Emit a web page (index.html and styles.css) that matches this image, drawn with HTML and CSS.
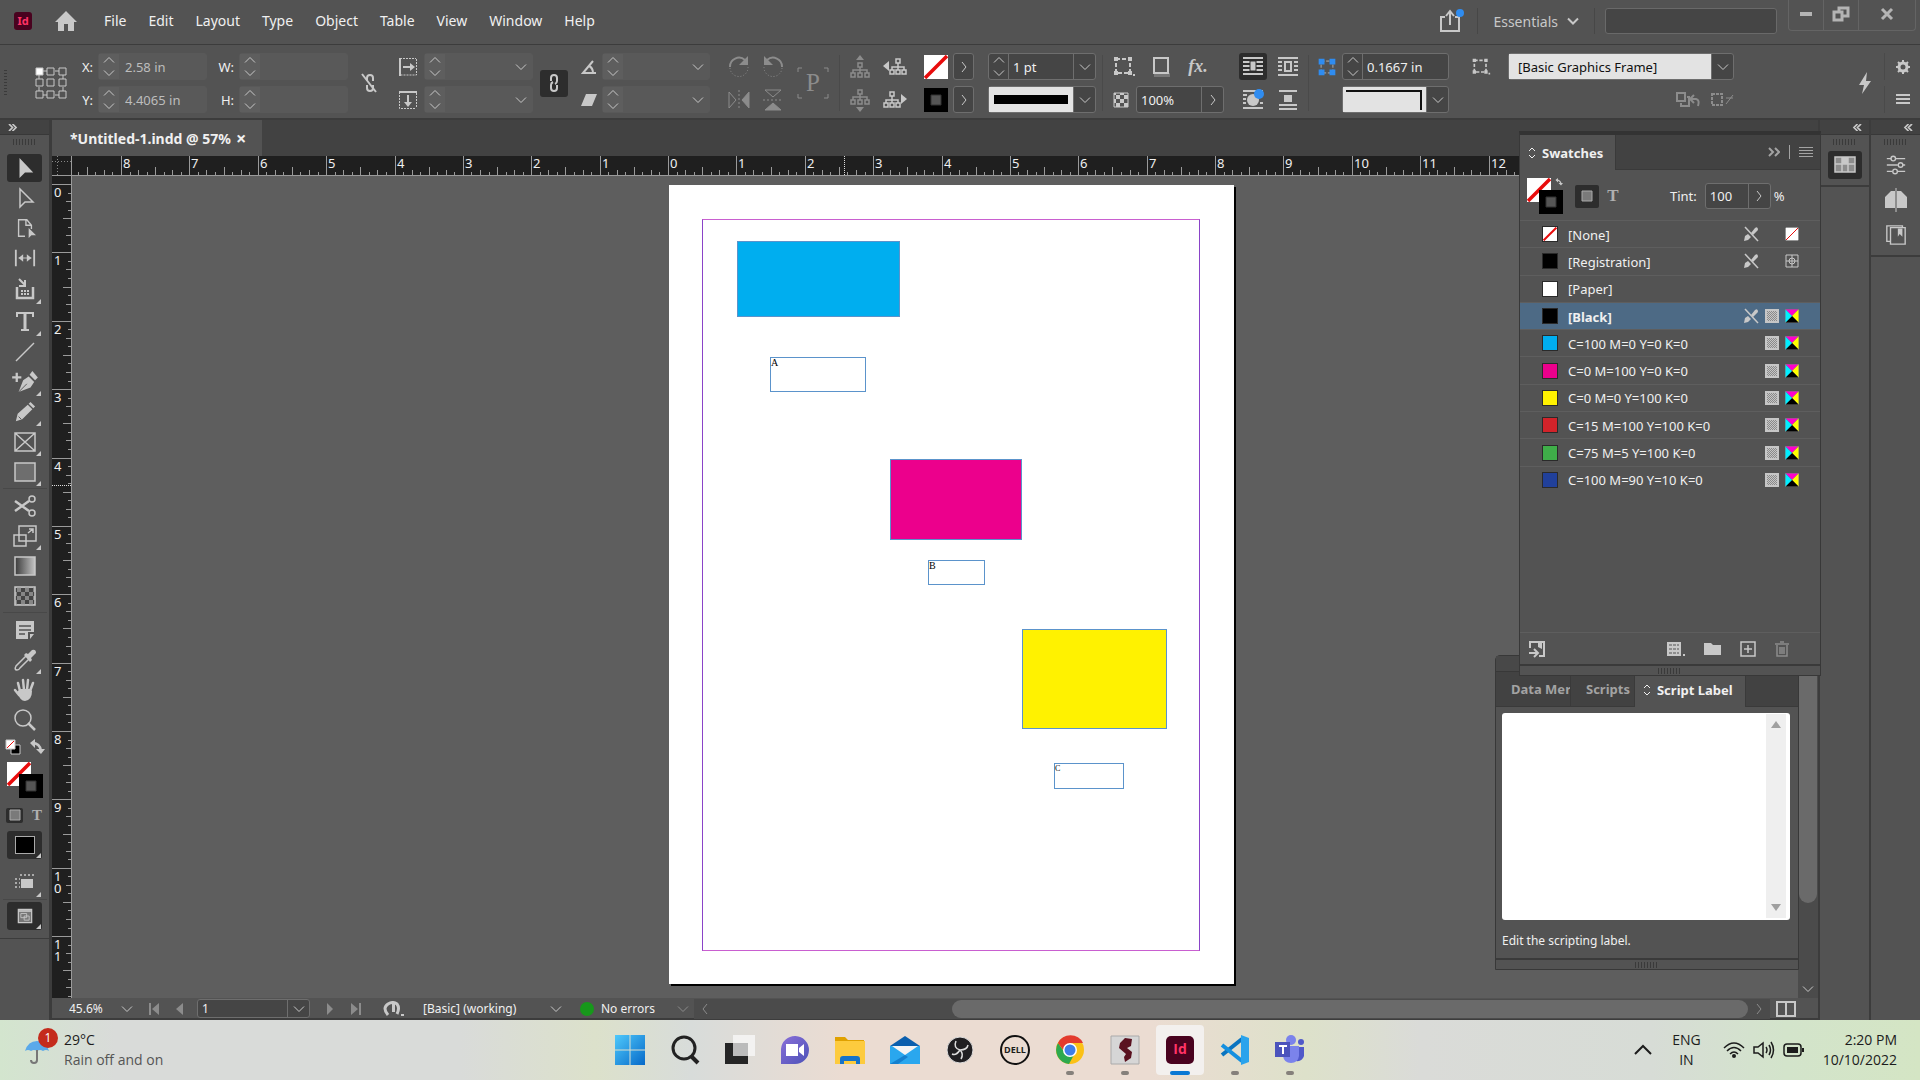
FILE: index.html
```html
<!DOCTYPE html>
<html lang="en">
<head>
  <meta charset="UTF-8">
  <meta name="viewport" content="width=device-width, initial-scale=1.0">
  <title>*Untitled-1.indd @ 57%</title>
  <link rel="stylesheet" href="styles.css">
</head>
<body>
  <!-- Icon sprite -->
  <svg class="sprite" width="0" height="0">
    <defs>
      <linearGradient id="g-grad"><stop offset="0" stop-color="#3a3a3a"/><stop offset="1" stop-color="#c4c4c4"/></linearGradient>
      <linearGradient id="g-win" x2="1" y2="1"><stop offset="0" stop-color="#4fc9fb"/><stop offset="1" stop-color="#0669c9"/></linearGradient>
      <linearGradient id="g-chat" x2="1" y2="1"><stop offset="0" stop-color="#8a6fd8"/><stop offset="1" stop-color="#4c52b8"/></linearGradient>
      <pattern id="p-check" width="8" height="8" patternUnits="userSpaceOnUse"><path fill="#c8c8c8" stroke="none" d="M0 0h4v4H0zM4 4h4v4H4z"/></pattern>
      <pattern id="p-dots" width="2" height="2" patternUnits="userSpaceOnUse"><path fill="#8a8a8a" stroke="none" d="M0 0h1v1H0zM1 1h1v1H1z"/></pattern>
    </defs>
    <symbol id="up" viewBox="0 0 12 8"><path d="M1 6.500l5-5 5 5"/></symbol>
    <symbol id="down" viewBox="0 0 12 8"><path d="M1 1.500l5 5 5-5"/></symbol>
    <symbol id="right" viewBox="0 0 8 12"><path d="M2 1l4 5-4 5"/></symbol>
    <symbol id="left" viewBox="0 0 8 12"><path d="M6 1L2 6l4 5"/></symbol>
    <symbol id="rr" viewBox="0 0 8 6"><path stroke-width="1.500" d="M1 0l3 3-3 3M4 0l3 3-3 3"/></symbol>
    <symbol id="ll" viewBox="0 0 8 6"><path stroke-width="1.500" d="M4 0L1 3l3 3M7 0L4 3l3 3"/></symbol>
    <symbol id="none" viewBox="0 0 24 24"><path fill="#fff" stroke="none" d="M0 0h24v24H0z"/><path stroke="#e80c0c" stroke-width="3.500" d="M1 23L23 1"/></symbol>
    <symbol id="stroke" viewBox="0 0 24 24"><path fill="#000" stroke="none" d="M0 0h24v24H0z"/><path fill="#555" stroke="#333" d="M7 7h10v10H7z"/></symbol>
    <symbol id="home" viewBox="0 0 24 24"><path fill="currentColor" stroke="none" d="M12 2L1 13h3v9h6v-7h4v7h6v-9h3z"/></symbol>
    <symbol id="share" viewBox="0 0 28 26"><path stroke-width="2" d="M8 9H4v14h18V9h-4M13 17V4M9 8l4-5 4 5"/><circle cx="23" cy="5" r="4" fill="#2f8cf0" stroke="none"/></symbol>
    <symbol id="anchor" viewBox="0 0 32 32"><path d="M8 4h4M20 4h4M8 28h4M20 28h4M4 8v4M4 20v4M28 8v4M28 20v4"/><path fill="#fff" d="M1 1h7v7H1z"/><path d="M12 1h7v7h-7zM24 1h7v7h-7zM1 12h7v7H1zM12 12h7v7h-7zM24 12h7v7h-7zM1 24h7v7H1zM12 24h7v7h-7zM24 24h7v7h-7z"/></symbol>
    <symbol id="link" viewBox="0 0 24 24"><path stroke-width="2" d="M9 10V7a3 3 0 0 1 6 0v3q0 2-2 3M15 14v3a3 3 0 0 1-6 0v-3q0-2 2-3"/></symbol>
    <symbol id="unlink" viewBox="0 0 24 24"><path stroke-width="2" d="M9 10V7a3 3 0 0 1 6 0v3M15 14v3a3 3 0 0 1-6 0v-3M4 3l14 18"/></symbol>
    <symbol id="scalex" viewBox="0 0 20 20"><path stroke-width="2" d="M2 1v18M5 10h9"/><path d="M2 1.500h16M18.500 2v16H3" stroke-dasharray="2 1"/><path fill="currentColor" stroke="none" d="M12 6l5 4-5 4z"/></symbol>
    <symbol id="scaley" viewBox="0 0 20 20"><path stroke-width="2" d="M1 2h18M10 5v9"/><path d="M1.500 2v16.500H18M18.500 3v15" stroke-dasharray="2 1"/><path fill="currentColor" stroke="none" d="M6 12l4 5 4-5z"/></symbol>
    <symbol id="angle" viewBox="0 0 16 16"><path stroke-width="2" d="M12 2L2 14h13M8 7q4 2 4 7"/></symbol>
    <symbol id="shear" viewBox="0 0 16 16"><path fill="currentColor" stroke="none" d="M5 2h11l-5 12H0z"/></symbol>
    <symbol id="cw" viewBox="0 0 24 24"><path stroke-width="2" d="M3 12a9 9 0 0 1 15-7"/><path d="M3 13a9 9 0 0 0 18-1" stroke-dasharray="1 2"/><path fill="currentColor" stroke="none" d="M21 1v9h-9z"/></symbol>
    <symbol id="ccw" viewBox="0 0 24 24"><path stroke-width="2" d="M21 12A9 9 0 0 0 6 5"/><path d="M21 13a9 9 0 0 1-18-1" stroke-dasharray="1 2"/><path fill="currentColor" stroke="none" d="M3 1v9h9z"/></symbol>
    <symbol id="fliph" viewBox="0 0 24 24"><path d="M2 4v16l7-8z"/><path d="M12 2v20" stroke-dasharray="2 2"/><path fill="currentColor" d="M22 4v16l-7-8z"/></symbol>
    <symbol id="flipv" viewBox="0 0 24 24"><path d="M4 2h16l-8 7z"/><path d="M2 12h20" stroke-dasharray="2 2"/><path fill="currentColor" d="M4 22h16l-8-7z"/></symbol>
    <symbol id="pbox" viewBox="0 0 32 32"><path d="M1 5V1h4M27 1h4v4M1 27v4h4M27 31h4v-4"/></symbol>
    <symbol id="treeup" viewBox="0 0 24 24"><path fill="currentColor" stroke="none" d="M8 5l4-5 4 5z"/><path stroke-width="1.500" d="M10 8h4v4h-4zM12 12v3M5 18v-3h14v3M12 15v3M3 18h4v4H3zM10 18h4v4h-4zM17 18h4v4h-4z"/></symbol>
    <symbol id="treedn" viewBox="0 0 24 24"><path fill="currentColor" stroke="none" d="M8 19l4 5 4-5z"/><path stroke-width="1.500" d="M10 2h4v4h-4zM12 6v3M5 12V9h14v3M12 9v3M3 12h4v4H3zM10 12h4v4h-4zM17 12h4v4h-4z"/></symbol>
    <symbol id="treel" viewBox="0 0 24 24"><path fill="currentColor" stroke="none" d="M6 6L0 11l6 5z"/><path stroke-width="1.500" d="M13 4h4v4h-4zM15 8v4M9 15v-3h12v3M15 12v3M7 15h4v4H7zM13 15h4v4h-4zM19 15h4v4h-4z"/></symbol>
    <symbol id="treer" viewBox="0 0 24 24"><path fill="currentColor" stroke="none" d="M18 6l6 5-6 5z"/><path stroke-width="1.500" d="M7 4h4v4H7zM9 8v4M3 15v-3h12v3M9 12v3M1 15h4v4H1zM7 15h4v4H7zM13 15h4v4h-4z"/></symbol>
    <symbol id="corners" viewBox="0 0 24 24"><path stroke-width="2" stroke-dasharray="4 2" d="M4 4h14v14H4z"/><path fill="currentColor" stroke="none" d="M2 2h4v4H2zM16 2h4v4h-4zM2 16h4v4H2zM16 16h4v4h-4zM21 19h2v2h-2z"/></symbol>
    <symbol id="shadow" viewBox="0 0 24 24"><path fill="#777" stroke="none" d="M5 18h16v4H5z"/><path stroke-width="2" fill="#555" d="M5 3h14v15H5z"/></symbol>
    <symbol id="opac" viewBox="0 0 18 18"><path fill="url(#p-check)" d="M2 2h14v14H2z"/></symbol>
    <symbol id="wrap1" viewBox="0 0 24 24"><path stroke-width="2" d="M2 3h20M2 7h20M2 11h20M2 15h20M2 19h20"/><path fill="currentColor" stroke="#2d2d2d" d="M9 6h6v10H9z"/></symbol>
    <symbol id="wrap2" viewBox="0 0 24 24"><path stroke-width="2" d="M2 3h20M2 7h4M18 7h4M2 11h4M18 11h4M2 15h4M18 15h4M2 20h20M9 7h6v9H9z"/></symbol>
    <symbol id="wrap3" viewBox="0 0 24 24"><path stroke-width="2" d="M2 3h20M2 7h4M2 11h3M2 15h3M19 15h3M2 20h20"/><circle cx="12" cy="12" r="6" fill="currentColor" stroke="none"/><circle cx="18" cy="6" r="5" fill="#2f8cf0" stroke="none"/></symbol>
    <symbol id="wrap4" viewBox="0 0 24 24"><path stroke-width="2" d="M3 3h18M3 17h18M3 21h18"/><path fill="currentColor" stroke="none" d="M8 7h8v7H8z"/></symbol>
    <symbol id="fit" viewBox="0 0 24 24"><path stroke="#888" stroke-width="2" d="M5 5h14v14H5z" stroke-dasharray="4 2"/><path fill="#2f8cf0" stroke="none" d="M2 2h7v7H2zM15 2h7v7h-7zM2 15h7v7H2zM15 15h7v7h-7z"/></symbol>
    <symbol id="bolt" viewBox="0 0 24 24"><path fill="currentColor" stroke="none" d="M14 1L6 14h5l-2 9 9-13h-5z"/></symbol>
    <symbol id="gear" viewBox="0 0 16 16"><circle cx="8" cy="8" r="4" stroke-width="3"/><path stroke-width="2" d="M8 1v3M8 12v3M1 8h3M12 8h3M3 3l2 2M11 11l2 2M13 3l-2 2M5 11l-2 2"/></symbol>
    <symbol id="menu" viewBox="0 0 16 16"><path stroke-width="2" d="M1 3h14M1 7h14M1 11h14"/></symbol>
    <symbol id="clearov" viewBox="0 0 28 20"><path stroke-width="2" d="M3 3h8v8H3zM7 13v3h8V7h-2M17 9h5q4 1 2 7M20 5l-4 4 4 4"/></symbol>
    <symbol id="brk" viewBox="0 0 24 20"><path stroke-width="2" stroke-dasharray="3 1" d="M2 4h10v11H2z"/><path d="M16 14l7-9M16 8h7"/></symbol>

    <symbol id="sel" viewBox="0 0 24 24"><path fill="currentColor" stroke="none" d="M6 1v22l6-6h9z"/></symbol>
    <symbol id="dir" viewBox="0 0 24 24"><path stroke-width="1.500" d="M7 3v18l5-5h8z"/></symbol>
    <symbol id="pagetool" viewBox="0 0 24 24"><path stroke-width="1.500" d="M12 21H5V3h9l5 6v4M13 3v6h6"/><path fill="currentColor" stroke="none" d="M16 12v11l3-3h5z"/></symbol>
    <symbol id="gap" viewBox="0 0 24 24"><path stroke-width="2" d="M2 3v18M22 3v18"/><path d="M5 12h14"/><path fill="currentColor" stroke="none" d="M5 12l5-4v8zM19 12l-5-4v8z"/></symbol>
    <symbol id="collect" viewBox="0 0 24 24"><path stroke-width="2.500" d="M4 10v11h16V10"/><path stroke-width="2" stroke-dasharray="2 1" d="M8 14h9M8 17h9"/><path stroke-width="2" d="M6 2l6 6M12 3v6H6"/></symbol>
    <symbol id="type" viewBox="0 0 24 24"><path stroke-width="3" d="M12 4v17"/><path stroke-width="2" d="M8 21h8M4 8V4h16v4"/></symbol>
    <symbol id="line" viewBox="0 0 24 24"><path stroke-width="1.500" d="M3 21L21 3"/></symbol>
    <symbol id="pen" viewBox="0 0 28 24"><path stroke-width="2.500" d="M0 7h10M5 2v10"/><path fill="currentColor" stroke="none" d="M7 23l5-13 6-4 6 6-4 6zM19 4l3-4 6 7-3 3z"/><path stroke="#535353" d="M7 23l9-9"/></symbol>
    <symbol id="pencil" viewBox="0 0 24 24"><path fill="currentColor" stroke="none" d="M2 22l2-8L15 4l5 5L9 20zM16 3l2-2 5 5-2 2z"/><path stroke="#535353" d="M5 17l3 3"/></symbol>
    <symbol id="xframe" viewBox="0 0 24 24"><path stroke-width="1.500" d="M2 3h20v18H2zM2 3l20 18M22 3L2 21"/></symbol>
    <symbol id="rectt" viewBox="0 0 24 24"><path fill="#6e6e6e" stroke-width="1.500" d="M2 3h20v18H2z"/></symbol>
    <symbol id="scissors" viewBox="0 0 24 24"><circle cx="19" cy="5" r="3" stroke-width="1.500"/><circle cx="19" cy="19" r="3" stroke-width="1.500"/><path stroke-width="2.500" d="M2 7l14 10M2 17L16 7"/></symbol>
    <symbol id="xform" viewBox="0 0 24 24"><path stroke-width="1.500" d="M6 2h17v15H6zM1 11h12v11H1zM15 9l5-4M16 5h4v4"/></symbol>
    <symbol id="gradt" viewBox="0 0 24 24"><path fill="url(#g-grad)" stroke-width="1.500" d="M2 3h20v18H2z"/></symbol>
    <symbol id="feather" viewBox="0 0 24 24"><path fill="#444" stroke="none" d="M2 3h20v18H2z"/><path fill="url(#p-check)" opacity=".5" stroke="none" d="M2 3h20v18H2z"/><path stroke-width="1.500" d="M2 3h20v18H2z"/></symbol>
    <symbol id="note" viewBox="0 0 24 24"><path fill="currentColor" stroke="none" d="M3 3h18v11h-6v7H3zM17 16h4l-4 5z"/><path stroke="#535353" stroke-width="1.500" d="M6 8h12M6 12h12M6 16h6"/></symbol>
    <symbol id="dropper" viewBox="0 0 24 24"><path stroke-width="1.500" d="M13 8L3 18q-2 4 1 4 2 0 3-2l9-9"/><path fill="currentColor" stroke="none" d="M11 7l2-2 2 1 4-4q4-1 4 3l-5 5 1 2-2 2z"/></symbol>
    <symbol id="hand" viewBox="0 0 24 24"><path stroke-width="2.500" stroke-linecap="round" d="M7 13L5 5M11 12L10 2M14 12l1-10M17 13l3-8M6 17l-4-5"/><path fill="currentColor" stroke="none" d="M4 14l3-3h10l2 2q0 9-7 10-5 0-8-9z"/></symbol>
    <symbol id="zoom" viewBox="0 0 24 24"><circle cx="10" cy="10" r="8" stroke-width="1.500"/><path stroke-width="2.500" d="M15 15l7 7"/></symbol>
    <symbol id="deffs" viewBox="0 0 16 16"><path fill="#000" d="M6 6h9v9H6z"/><path fill="#fff" d="M1 1h9v9H1z"/><path stroke="#e80c0c" d="M2 9l7-7"/></symbol>
    <symbol id="swapfs" viewBox="0 0 16 16"><path stroke-width="2.500" d="M3 4q8 0 9 8"/><path fill="currentColor" stroke="none" d="M1 4l5-4v9zM7 10h9l-4 5z"/></symbol>
    <symbol id="fmt" viewBox="0 0 12 12"><path fill="#7a7a7a" stroke="#aaa" d="M1 1h10v10H1z"/></symbol>
    <symbol id="preview" viewBox="0 0 24 24"><path fill="currentColor" stroke="none" d="M8 10h12v9H8z"/><path stroke-width="1.500" stroke-dasharray="2 2" d="M2 10h5M2 14h5M2 18h5M8 5v4M12 5v4M16 5v4M20 5v4"/></symbol>
    <symbol id="screen" viewBox="0 0 24 24"><path fill="#777" stroke-width="1.500" d="M4 4h16v16H4z"/><path stroke-width="2" d="M4 6h16"/><path d="M7 9h7v5H7zM11 12h6v5h-6z"/></symbol>

    <symbol id="noedit" viewBox="0 0 16 16"><path fill="currentColor" stroke="none" d="M1 15l1-5 3-2 3 3-3 3zM8 7l4-5q3-2 3 2l-5 5z"/><path stroke-width="1.500" d="M2 1l13 14"/></symbol>
    <symbol id="reg" viewBox="0 0 14 14"><path d="M1 1h12v12H1zM7 1v12M1 7h12"/><circle cx="7" cy="7" r="3"/></symbol>
    <symbol id="halftone" viewBox="0 0 14 14"><path fill="#c6c6c6" stroke="none" d="M0 0h14v14H0z"/><path fill="url(#p-dots)" stroke="none" d="M2 2h10v10H2z"/></symbol>
    <symbol id="cmyk" viewBox="0 0 14 14"><g stroke="none"><path fill="#f0c" d="M0 0h14L7 7z"/><path fill="#ff0" d="M14 0v14L7 7z"/><path fill="#000" d="M0 14h14L7 7z"/><path fill="#0ef" d="M0 0v14l7-7z"/></g><path stroke="#777" d="M0 0h14v14H0z"/></symbol>
    <symbol id="tosort" viewBox="0 0 8 12"><path d="M1 4l3-3 3 3M1 8l3 3 3-3"/></symbol>
    <symbol id="swgrid" viewBox="0 0 22 18"><path fill="#8c8c8c" stroke-width="1.500" d="M1 1h20v15H1zM1 8h20M8 1v15M14 1v15"/><path fill="currentColor" stroke="none" d="M8 1h6v7H8z"/></symbol>
    <symbol id="sliders" viewBox="0 0 24 24"><path stroke-width="1.500" d="M2 5h5M12 5h10M2 12h12M19 12h3M2 19h6M13 19h9"/><g stroke-width="1.500"><circle cx="9" cy="5" r="2.500"/><circle cx="17" cy="12" r="2.500"/><circle cx="11" cy="19" r="2.500"/></g></symbol>
    <symbol id="pages" viewBox="0 0 24 24"><path d="M12 0v24"/><path fill="currentColor" stroke="none" d="M1 9l6-6h4v17H1zM23 9l-6-6h-4v17h10z"/></symbol>
    <symbol id="cclib" viewBox="0 0 24 24"><path stroke-width="1.500" d="M6 4h16v18H6zM6 19H2V2h17v2"/><path fill="currentColor" stroke="none" d="M14 5h5v9l-3-3-2 3z"/></symbol>
    <symbol id="tolib" viewBox="0 0 18 18"><path stroke-width="2" d="M2 8V2h14v14h-5M1 13h8M6 9l4 4-4 4"/><path fill="currentColor" stroke="none" d="M10 2h4v7l-4-2z"/></symbol>
    <symbol id="swview" viewBox="0 0 20 16"><path fill="currentColor" stroke="none" d="M1 1h14v14H1zM17 13h2v2h-2z"/><path stroke="#535353" stroke-dasharray="3 1" d="M3 4h10M3 8h10M3 12h10"/></symbol>
    <symbol id="folder" viewBox="0 0 18 16"><path fill="currentColor" stroke="none" d="M0 2h7l2 2h8v10H0z"/></symbol>
    <symbol id="add" viewBox="0 0 16 16"><path stroke-width="1.500" d="M1 1h14v14H1zM8 4v8M4 8h8"/></symbol>
    <symbol id="trash" viewBox="0 0 16 16"><path stroke-width="1.500" d="M1 3h14M6 1h4M3 4v11h10V4M6 6v7M8 6v7M10 6v7"/></symbol>
    <symbol id="first" viewBox="0 0 12 12"><path fill="currentColor" stroke="none" d="M1 0h2v12H1zM11 0v12L4 6z"/></symbol>
    <symbol id="prev" viewBox="0 0 12 12"><path fill="currentColor" stroke="none" d="M9 0v12L2 6z"/></symbol>
    <symbol id="next" viewBox="0 0 12 12"><path fill="currentColor" stroke="none" d="M3 0v12l6-6z"/></symbol>
    <symbol id="last" viewBox="0 0 12 12"><path fill="currentColor" stroke="none" d="M9 0h2v12H9zM1 0v12l7-6z"/></symbol>
    <symbol id="preflight" viewBox="0 0 22 16"><path stroke-width="3" d="M5 14Q-1 7 5 3q5-3 9 0 3 4 0 10"/><path fill="currentColor" stroke="none" d="M9 3h3v8H9zM18 13h3v2h-3z"/></symbol>
    <symbol id="split" viewBox="0 0 20 16"><path stroke-width="2" d="M1 1h18v14H1zM10 1v14"/></symbol>
  </svg>

  <div class="app">
    <header class="menubar">
      <span class="logo">Id</span>
      <button class="home" aria-label="Home"><svg width="24" height="24"><use href="#home"/></svg></button>
      <nav class="menus">
        <button>File</button><button>Edit</button><button>Layout</button><button>Type</button><button>Object</button><button>Table</button><button>View</button><button>Window</button><button>Help</button>
      </nav>
      <button class="share" aria-label="Share"><svg width="28" height="26"><use href="#share"/></svg></button>
      <button class="workspace">Essentials <svg width="12" height="8"><use href="#down"/></svg></button>
      <input class="search" type="search" aria-label="Search">
      <div class="win-ctl">
        <button aria-label="Minimize"><svg width="14" height="14" viewBox="0 0 14 14"><path stroke-width="4" d="M1 7h12"/></svg></button>
        <button aria-label="Restore"><svg width="18" height="16" viewBox="0 0 18 16"><path stroke-width="3" d="M2 6h8v8H2zM7 6V2h9v8h-5"/></svg></button>
        <button aria-label="Close"><svg width="14" height="14" viewBox="0 0 14 14"><path stroke-width="3" d="M2 2l10 10M12 2L2 12"/></svg></button>
      </div>
    </header>

    <section class="control">
      <span class="grip-v tall"></span>
      <svg class="tall" width="32" height="32"><use href="#anchor"/></svg>
      <label for="x">X:</label>
      <div class="field off"><span class="spin"><button aria-label="Up"><svg width="12" height="8"><use href="#up"/></svg></button><button aria-label="Down"><svg width="12" height="8"><use href="#down"/></svg></button></span><input id="x" value="2.58 in"></div>
      <label for="w">W:</label>
      <div class="field off"><span class="spin"><button aria-label="Up"><svg width="12" height="8"><use href="#up"/></svg></button><button aria-label="Down"><svg width="12" height="8"><use href="#down"/></svg></button></span><input id="w"></div>
      <button class="tall" aria-label="Constrain"><svg width="24" height="24"><use href="#unlink"/></svg></button>
      <svg width="20" height="20"><use href="#scalex"/></svg>
      <div class="field off"><span class="spin"><button aria-label="Up"><svg width="12" height="8"><use href="#up"/></svg></button><button aria-label="Down"><svg width="12" height="8"><use href="#down"/></svg></button></span><input aria-label="Scale X"><button class="drop" aria-label="Open"><svg width="12" height="8"><use href="#down"/></svg></button></div>
      <button class="tall pressed" aria-label="Link scale"><svg width="24" height="24"><use href="#link"/></svg></button>
      <svg width="16" height="16"><use href="#angle"/></svg>
      <div class="field off"><span class="spin"><button aria-label="Up"><svg width="12" height="8"><use href="#up"/></svg></button><button aria-label="Down"><svg width="12" height="8"><use href="#down"/></svg></button></span><input aria-label="Rotation"><button class="drop" aria-label="Open"><svg width="12" height="8"><use href="#down"/></svg></button></div>
      <span class="tall"></span>
      <button class="dim" aria-label="Rotate right"><svg width="24" height="24"><use href="#cw"/></svg></button>
      <button class="dim" aria-label="Rotate left"><svg width="24" height="24"><use href="#ccw"/></svg></button>
      <span class="tall pbox dim"><svg width="32" height="32"><use href="#pbox"/></svg><b>P</b></span>
      <span class="tall rule"></span>
      <button class="dim" aria-label="Select parent"><svg width="24" height="24"><use href="#treeup"/></svg></button>
      <button aria-label="Previous object"><svg width="24" height="24"><use href="#treel"/></svg></button>
      <svg class="proxy" width="24" height="24"><use href="#none"/></svg>
      <button class="box" aria-label="Fill"><svg width="8" height="12"><use href="#right"/></svg></button>
      <span class="tall"></span>
      <div class="field"><span class="spin"><button aria-label="Up"><svg width="12" height="8"><use href="#up"/></svg></button><button aria-label="Down"><svg width="12" height="8"><use href="#down"/></svg></button></span><input aria-label="Stroke weight" value="1 pt"><button class="drop" aria-label="Open"><svg width="12" height="8"><use href="#down"/></svg></button></div>
      <span class="tall rule"></span>
      <div class="fx-row">
        <button aria-label="Corner options"><svg width="24" height="24"><use href="#corners"/></svg></button>
        <button aria-label="Drop shadow"><svg width="24" height="24"><use href="#shadow"/></svg></button>
        <button class="fx" aria-label="Effects">fx.</button>
      </div>
      <button class="pressed" aria-label="No text wrap"><svg width="24" height="24"><use href="#wrap1"/></svg></button>
      <button aria-label="Wrap around box"><svg width="24" height="24"><use href="#wrap2"/></svg></button>
      <span class="tall rule"></span>
      <svg width="20" height="20"><use href="#fit"/></svg>
      <div class="field"><span class="spin"><button aria-label="Up"><svg width="12" height="8"><use href="#up"/></svg></button><button aria-label="Down"><svg width="12" height="8"><use href="#down"/></svg></button></span><input aria-label="Corner size" value="0.1667 in"></div>
      <button class="autofit" aria-label="Auto fit"><svg width="20" height="20"><use href="#corners"/></svg></button>
      <div class="field light"><select aria-label="Object style"><option>[Basic Graphics Frame]</option></select><span class="drop"><svg width="12" height="8"><use href="#down"/></svg></span></div>
      <span class="tall"></span>
      <button class="tall" aria-label="Quick apply"><svg width="24" height="24"><use href="#bolt"/></svg></button>
      <button class="edge" aria-label="Settings"><svg width="16" height="16"><use href="#gear"/></svg></button>

      <label for="y">Y:</label>
      <div class="field off"><span class="spin"><button aria-label="Up"><svg width="12" height="8"><use href="#up"/></svg></button><button aria-label="Down"><svg width="12" height="8"><use href="#down"/></svg></button></span><input id="y" value="4.4065 in"></div>
      <label for="h">H:</label>
      <div class="field off"><span class="spin"><button aria-label="Up"><svg width="12" height="8"><use href="#up"/></svg></button><button aria-label="Down"><svg width="12" height="8"><use href="#down"/></svg></button></span><input id="h"></div>
      <svg width="20" height="20"><use href="#scaley"/></svg>
      <div class="field off"><span class="spin"><button aria-label="Up"><svg width="12" height="8"><use href="#up"/></svg></button><button aria-label="Down"><svg width="12" height="8"><use href="#down"/></svg></button></span><input aria-label="Scale Y"><button class="drop" aria-label="Open"><svg width="12" height="8"><use href="#down"/></svg></button></div>
      <svg width="16" height="16"><use href="#shear"/></svg>
      <div class="field off"><span class="spin"><button aria-label="Up"><svg width="12" height="8"><use href="#up"/></svg></button><button aria-label="Down"><svg width="12" height="8"><use href="#down"/></svg></button></span><input aria-label="Shear"><button class="drop" aria-label="Open"><svg width="12" height="8"><use href="#down"/></svg></button></div>
      <button class="dim" aria-label="Flip horizontal"><svg width="24" height="24"><use href="#fliph"/></svg></button>
      <button class="dim" aria-label="Flip vertical"><svg width="24" height="24"><use href="#flipv"/></svg></button>
      <button class="dim" aria-label="Select content"><svg width="24" height="24"><use href="#treedn"/></svg></button>
      <button aria-label="Next object"><svg width="24" height="24"><use href="#treer"/></svg></button>
      <svg class="proxy" width="24" height="24"><use href="#stroke"/></svg>
      <button class="box" aria-label="Stroke"><svg width="8" height="12"><use href="#right"/></svg></button>
      <div class="field light"><span class="stroke-type"></span><button class="drop" aria-label="Stroke type"><svg width="12" height="8"><use href="#down"/></svg></button></div>
      <div class="fx-row">
        <svg width="18" height="18"><use href="#opac"/></svg>
        <div class="field"><input aria-label="Opacity" value="100%"><button class="drop" aria-label="Open"><svg width="8" height="12"><use href="#right"/></svg></button></div>
      </div>
      <button aria-label="Wrap around shape"><svg width="24" height="24"><use href="#wrap3"/></svg></button>
      <button aria-label="Jump object"><svg width="24" height="24"><use href="#wrap4"/></svg></button>
      <span></span>
      <div class="field light"><span class="corner-type"></span><button class="drop" aria-label="Corner shape"><svg width="12" height="8"><use href="#down"/></svg></button></div>
      <span></span>
      <div class="overrides dim">
        <button aria-label="Clear overrides"><svg width="28" height="20"><use href="#clearov"/></svg></button>
        <button aria-label="Break link"><svg width="24" height="20"><use href="#brk"/></svg></button>
      </div>
      <button class="edge" aria-label="Panel menu"><svg width="16" height="16"><use href="#menu"/></svg></button>
    </section>

    <div class="work">
      <aside class="tools">
        <div class="dock-head left"><svg width="11" height="7"><use href="#rr"/></svg></div>
        <div class="tool-list">
          <span class="grip"></span>
          <button class="on" aria-label="Selection"><svg width="22" height="22"><use href="#sel"/></svg></button>
          <button aria-label="Direct selection"><svg width="24" height="24"><use href="#dir"/></svg></button>
          <button aria-label="Page"><svg width="22" height="22"><use href="#pagetool"/></svg></button>
          <button aria-label="Gap"><svg width="24" height="22"><use href="#gap"/></svg></button>
          <button class="more roomy" aria-label="Content collector"><svg width="24" height="24"><use href="#collect"/></svg></button>
          <button class="more roomy" aria-label="Type"><svg width="24" height="24"><use href="#type"/></svg></button>
          <button aria-label="Line"><svg width="24" height="24"><use href="#line"/></svg></button>
          <button class="more" aria-label="Pen"><svg width="28" height="22"><use href="#pen"/></svg></button>
          <button class="more" aria-label="Pencil"><svg width="22" height="22"><use href="#pencil"/></svg></button>
          <button class="more" aria-label="Rectangle frame"><svg width="24" height="24"><use href="#xframe"/></svg></button>
          <button class="more" aria-label="Rectangle"><svg width="24" height="24"><use href="#rectt"/></svg></button>
          <hr>
          <button aria-label="Scissors"><svg width="24" height="24"><use href="#scissors"/></svg></button>
          <button class="more" aria-label="Free transform"><svg width="24" height="24"><use href="#xform"/></svg></button>
          <button aria-label="Gradient swatch"><svg width="24" height="24"><use href="#gradt"/></svg></button>
          <button aria-label="Gradient feather"><svg width="24" height="24"><use href="#feather"/></svg></button>
          <hr>
          <button aria-label="Note"><svg width="24" height="24"><use href="#note"/></svg></button>
          <button class="more" aria-label="Eyedropper"><svg width="24" height="24"><use href="#dropper"/></svg></button>
          <button aria-label="Hand"><svg width="24" height="24"><use href="#hand"/></svg></button>
          <button aria-label="Zoom"><svg width="24" height="24"><use href="#zoom"/></svg></button>
          <div class="pair">
            <button aria-label="Default fill and stroke"><svg width="16" height="16"><use href="#deffs"/></svg></button>
            <button aria-label="Swap"><svg width="16" height="16"><use href="#swapfs"/></svg></button>
          </div>
          <div class="fillstroke"><svg width="24" height="24"><use href="#none"/></svg><svg width="24" height="24"><use href="#stroke"/></svg></div>
          <div class="pair">
            <button class="sq" aria-label="Container"><svg width="12" height="12"><use href="#fmt"/></svg></button>
            <button class="tee" aria-label="Text">T</button>
          </div>
          <button class="on more apply" aria-label="Apply color"><span class="chip"></span></button>
          <button class="more low" aria-label="View options"><svg width="24" height="24"><use href="#preview"/></svg></button>
          <hr>
          <button class="on more" aria-label="Screen mode"><svg width="20" height="20"><use href="#screen"/></svg></button>
        </div>
      </aside>

      <main class="doc">
        <div class="tabs"><div class="tab">*Untitled-1.indd @ 57% <button aria-label="Close">×</button></div></div>
        <div class="ruler-x"><span class="origin"></span><div class="scale" id="rulerX"></div></div>
        <div class="view">
          <div class="ruler-y" id="rulerY"></div>
          <div class="canvas">
            <div class="page">
              <div class="margins"></div>
              <div class="shape cyan"></div>
              <div class="frame a">A</div>
              <div class="shape magenta"></div>
              <div class="frame b">B</div>
              <div class="shape yellow"></div>
              <div class="frame c">C</div>
            </div>
          </div>
          <div class="vscroll"><span class="thumb"></span><svg width="12" height="8"><use href="#down"/></svg></div>
        </div>
        <footer class="status">
          <select class="zoom" aria-label="Zoom level"><option>45.6%</option></select>
          <svg class="chev" width="12" height="8"><use href="#down"/></svg>
          <button class="nav dim" aria-label="First page"><svg width="12" height="12"><use href="#first"/></svg></button>
          <button class="nav dim" aria-label="Previous page"><svg width="12" height="12"><use href="#prev"/></svg></button>
          <div class="field"><input aria-label="Page" value="1"><button class="drop" aria-label="Open"><svg width="12" height="8"><use href="#down"/></svg></button></div>
          <button class="nav dim" aria-label="Next page"><svg width="12" height="12"><use href="#next"/></svg></button>
          <button class="nav dim" aria-label="Last page"><svg width="12" height="12"><use href="#last"/></svg></button>
          <button class="pre" aria-label="Preflight"><svg width="22" height="16"><use href="#preflight"/></svg></button>
          <select class="profile" aria-label="Preflight profile"><option>[Basic] (working)</option></select>
          <svg class="chev" width="12" height="8"><use href="#down"/></svg>
          <span class="ok"></span><span class="errs">No errors</span>
          <svg class="chev dim" width="12" height="8"><use href="#down"/></svg>
          <div class="hscroll dim"><svg width="8" height="12"><use href="#left"/></svg><span class="thumb"></span><svg width="8" height="12"><use href="#right"/></svg></div>
          <button class="split" aria-label="Split view"><svg width="20" height="16"><use href="#split"/></svg></button>
        </footer>
      </main>

      <aside class="dock">
        <div class="dock-head"><svg width="11" height="7"><use href="#ll"/></svg></div>
        <div class="dock-list short"><span class="grip"></span><button class="on" aria-label="Swatches"><svg width="22" height="18"><use href="#swgrid"/></svg></button></div>
      </aside>
      <aside class="dock">
        <div class="dock-head"><svg width="11" height="7"><use href="#ll"/></svg></div>
        <div class="dock-list"><span class="grip"></span>
          <button aria-label="Properties"><svg width="24" height="22"><use href="#sliders"/></svg></button>
          <button aria-label="Pages"><svg width="24" height="24"><use href="#pages"/></svg></button>
          <button aria-label="CC Libraries"><svg width="22" height="22"><use href="#cclib"/></svg></button>
        </div>
      </aside>

      <!-- Floating panels -->
      <section class="panel script">
        <div class="panel-cap"></div>
        <div class="panel-tabs">
          <button class="merge">Data Mer</button>
          <button>Scripts</button>
          <button class="cur"><svg width="8" height="12"><use href="#tosort"/></svg>Script Label</button>
        </div>
        <div class="label-box">
          <textarea aria-label="Script label"></textarea>
          <div class="label-scroll"><span class="tri up"></span><span class="tri"></span></div>
        </div>
        <p>Edit the scripting label.</p>
        <div class="panel-foot"><span class="grip"></span></div>
      </section>

      <section class="panel swatches">
        <div class="panel-tabs">
          <button class="cur"><svg width="8" height="12"><use href="#tosort"/></svg>Swatches</button>
          <button class="collapse" aria-label="Collapse"><svg width="12" height="10" viewBox="0 0 12 10"><path stroke-width="2" d="M1 1l4 4-4 4M7 1l4 4-4 4"/></svg></button>
          <button class="pmenu" aria-label="Menu"><svg width="14" height="12" viewBox="0 0 14 12"><path d="M0 1.500h14M0 4.500h14M0 7.500h14M0 10.500h14"/></svg></button>
        </div>
        <div class="sw-tools">
          <div class="fillstroke"><svg width="24" height="24"><use href="#none"/></svg><svg width="24" height="24"><use href="#stroke"/></svg><svg class="swap" width="8" height="8" viewBox="0 0 16 16"><use href="#swapfs"/></svg></div>
          <button class="sq" aria-label="Container"><svg width="12" height="12"><use href="#fmt"/></svg></button>
          <button class="tee" aria-label="Text">T</button>
          <label for="tint">Tint:</label>
          <div class="field"><input id="tint" value="100"><button class="drop" aria-label="Open"><svg width="8" height="12"><use href="#right"/></svg></button></div>
          <span>%</span>
        </div>
        <ul class="sw-list">
          <li><svg class="chip" width="16" height="16"><use href="#none"/></svg><span>[None]</span><svg width="16" height="16"><use href="#noedit"/></svg><i></i><svg width="14" height="14" viewBox="0 0 14 14"><path fill="#fff" stroke="#2a2a2a" d="M0 0h14v14H0z"/><path stroke="#e80c0c" d="M1 13L13 1"/></svg></li>
          <li><i class="chip black"></i><span>[Registration]</span><svg width="16" height="16"><use href="#noedit"/></svg><i></i><svg width="14" height="14"><use href="#reg"/></svg></li>
          <li><i class="chip paper"></i><span>[Paper]</span></li>
          <li class="cur"><i class="chip black"></i><span>[Black]</span><svg width="16" height="16"><use href="#noedit"/></svg><svg width="14" height="14"><use href="#halftone"/></svg><svg width="14" height="14"><use href="#cmyk"/></svg></li>
          <li><i class="chip cyan"></i><span>C=100 M=0 Y=0 K=0</span><svg width="14" height="14"><use href="#halftone"/></svg><svg width="14" height="14"><use href="#cmyk"/></svg></li>
          <li><i class="chip magenta"></i><span>C=0 M=100 Y=0 K=0</span><svg width="14" height="14"><use href="#halftone"/></svg><svg width="14" height="14"><use href="#cmyk"/></svg></li>
          <li><i class="chip yellow"></i><span>C=0 M=0 Y=100 K=0</span><svg width="14" height="14"><use href="#halftone"/></svg><svg width="14" height="14"><use href="#cmyk"/></svg></li>
          <li><i class="chip red"></i><span>C=15 M=100 Y=100 K=0</span><svg width="14" height="14"><use href="#halftone"/></svg><svg width="14" height="14"><use href="#cmyk"/></svg></li>
          <li><i class="chip green"></i><span>C=75 M=5 Y=100 K=0</span><svg width="14" height="14"><use href="#halftone"/></svg><svg width="14" height="14"><use href="#cmyk"/></svg></li>
          <li><i class="chip blue"></i><span>C=100 M=90 Y=10 K=0</span><svg width="14" height="14"><use href="#halftone"/></svg><svg width="14" height="14"><use href="#cmyk"/></svg></li>
        </ul>
        <div class="sw-actions">
          <button class="lib" aria-label="Add to library"><svg width="18" height="18"><use href="#tolib"/></svg></button>
          <button aria-label="Show swatches"><svg width="20" height="16"><use href="#swview"/></svg></button>
          <button aria-label="New group"><svg width="18" height="16"><use href="#folder"/></svg></button>
          <button aria-label="New swatch"><svg width="16" height="16"><use href="#add"/></svg></button>
          <button class="dim" aria-label="Delete"><svg width="16" height="16"><use href="#trash"/></svg></button>
        </div>
        <div class="panel-foot"><span class="grip"></span></div>
      </section>
    </div>
  </div>

  <div class="taskbar">
    <button class="weather">
      <span class="umbrella"><svg width="28" height="28" viewBox="0 0 28 28"><path fill="#5aa9ea" stroke="none" d="M1 15Q4 5 13 5t12 10q-3-2-6 0-3-2-6 0-3-2-6 0-3-2-6 0z"/><path stroke="#777" stroke-width="2" d="M13 14v10q0 3-3 3t-3-3"/></svg><em>1</em></span>
      <span>29°C<br><small>Rain off and on</small></span>
    </button>
    <nav class="apps">
      <button aria-label="Start"><svg width="30" height="30" viewBox="0 0 30 30"><path fill="url(#g-win)" stroke="none" d="M0 0h14.500v14.500H0zM15.500 0H30v14.500H15.500zM0 15.500h14.500V30H0zM15.500 15.500H30V30H15.500z"/></svg></button>
      <button aria-label="Search"><svg width="30" height="30" viewBox="0 0 30 30"><circle cx="14" cy="13" r="11" stroke="#222" stroke-width="3"/><path stroke="#222" stroke-width="4" d="M21 21l7 7"/></svg></button>
      <button aria-label="Task view"><svg width="30" height="30" viewBox="0 0 30 30"><path fill="#252525" stroke="none" d="M0 8h23v21H0z"/><path fill="#f7f7f7" stroke="none" d="M8 0h22v21H8z" opacity=".8"/><path fill="#bbb" stroke="none" d="M8 8h15v13H8z"/></svg></button>
      <button aria-label="Chat"><svg width="30" height="30" viewBox="0 0 30 30"><path fill="url(#g-chat)" stroke="none" d="M1 29V14a14 14 0 1 1 14 15z"/><path fill="#fff" stroke="none" d="M6 9h12v12H6zM19 13l5-4v12l-5-4z"/></svg></button>
      <button aria-label="File Explorer"><svg width="30" height="30" viewBox="0 0 30 30"><path fill="#e0a100" stroke="none" d="M0 2h10l3 3h16v8H0z"/><path fill="#fdcb3e" stroke="none" d="M0 6h30v23H0z"/><path fill="#1673c9" stroke="none" d="M5 29v-5q0-3 3-3h14q3 0 3 3v5h-4v-3H9v3z"/></svg></button>
      <button aria-label="Mail"><svg width="30" height="30" viewBox="0 0 30 30"><path fill="#0a5fae" stroke="none" d="M0 11L15 1l15 10v4H0z"/><path fill="#2aa7ee" stroke="none" d="M0 11h30v18H0z"/><path fill="#f4f4f4" stroke="none" d="M2 11h26L15 20z"/><path fill="#1480cf" stroke="none" d="M0 29l15-9 3 2-10 7z"/></svg></button>
      <button aria-label="OBS"><svg width="28" height="28" viewBox="0 0 28 28"><circle cx="14" cy="14" r="13" fill="#201f22" stroke="#ddd"/><path stroke="#ddd" stroke-width="1.500" d="M10 5q-3 7 4 9M14 14q7 0 8-5M14 14q4 4 1 9M6 18q4 2 8-4"/></svg></button>
      <button class="dell" aria-label="Dell">DELL</button>
      <button class="run" aria-label="Chrome"><svg width="30" height="30" viewBox="0 0 30 30"><g stroke="none"><circle cx="15" cy="15" r="14" fill="#fbc116"/><path fill="#e33b2e" d="M3 8A14 14 0 0 1 28 8H15z"/><path fill="#2da94f" d="M3 8a14 14 0 0 0 11 21l6-11-10 0z"/><path fill="#e33b2e" d="M3 8h12l-6 8z"/><circle cx="15" cy="15" r="7" fill="#fff"/><circle cx="15" cy="15" r="5.500" fill="#3f7ee8"/></g></svg></button>
      <button class="run" aria-label="ExtendScript"><svg width="30" height="30" viewBox="0 0 30 30"><path fill="#d6d6d6" stroke="#aaa" d="M1 1h28v28H1z"/><path fill="#5a1220" stroke="none" d="M15 3l7 1-1 7-4 2 5 4-1 6-6 4-1-5 2-3-7-6 1-5z"/></svg></button>
      <button class="run active" aria-label="InDesign"><span class="id-tile">Id</span></button>
      <button class="run" aria-label="VS Code"><svg width="30" height="30" viewBox="0 0 30 30"><path stroke="#0a74c0" stroke-width="4" d="M2 20L22 4"/><path stroke="#1590e0" stroke-width="4" d="M2 10l20 16"/><path fill="#2aa3ec" stroke="none" d="M21 0l8 3v24l-8 3z"/></svg></button>
      <button class="run" aria-label="Teams"><svg width="30" height="30" viewBox="0 0 30 30"><g stroke="none"><circle cx="16" cy="5" r="5" fill="#7b83eb"/><circle cx="26" cy="7" r="3" fill="#5059c9"/><path fill="#5059c9" d="M20 12h9v9q-2 6-8 5z"/><path fill="#7b83eb" d="M10 11h14v10q-1 7-8 7t-8-7z"/><path fill="#4b53bc" d="M0 7h15v15H0z"/></g><path stroke="#fff" stroke-width="2" d="M4 11h8M8 11v8"/></svg></button>
    </nav>
    <div class="tray">
      <button aria-label="Hidden icons"><svg width="18" height="12" viewBox="0 0 18 12"><path stroke-width="2" d="M1 10l8-8 8 8"/></svg></button>
      <button class="lang">ENG<br>IN</button>
      <button class="net" aria-label="Network, volume, battery">
        <svg width="22" height="18" viewBox="0 0 22 18"><path stroke-width="1.500" d="M1 7q10-10 20 0M4 10q7-7 14 0M7 13q4-4 8 0"/><circle cx="11" cy="15" r="2" fill="currentColor" stroke="none"/></svg>
        <svg width="22" height="18" viewBox="0 0 22 18"><path stroke-width="1.500" d="M1 6h4l5-4v14l-5-4H1zM13 6q2 3 0 6M16 4q3 5 0 10M18 1q5 8 0 16"/></svg>
        <svg width="22" height="18" viewBox="0 0 22 18"><rect x="1" y="3" width="17" height="12" rx="3" stroke-width="1.500"/><path fill="currentColor" stroke="none" d="M4 6h11v6H4zM19 7h2v4h-2z"/></svg>
      </button>
      <button class="clock">2:20 PM<br>10/10/2022</button>
    </div>
  </div>

  <script src="rulers.js"></script>
</body>
</html>
```
FILE: styles.css
```css
* {
  box-sizing: border-box;
}

body {
  margin: 0;
  height: 100vh;
  display: flex;
  flex-direction: column;
  overflow: hidden;
  background: #535353;
  color: #f0f0f0;
  font-family: "Noto Sans", "Open Sans", sans-serif;
  font-size: 13px;
}

button, input, select, textarea {
  font: inherit;
  color: inherit;
  background: none;
  border: 0;
  padding: 0;
  margin: 0;
  border-radius: 0;
  outline: none;
  min-width: 0;
}

button {
  display: flex;
  align-items: center;
  justify-content: center;
  color: #c8c8c8;
}

select {
  appearance: none;
}

svg {
  display: block;
  flex: none;
  fill: none;
  stroke: currentColor;
  color: #c8c8c8;
}

button svg {
  color: inherit;
}

.sprite {
  position: absolute;
}

.dim, .dim button {
  color: #8c8c8c;
}

.dim svg {
  color: inherit;
}

.app {
  flex: 1;
  min-height: 0;
  display: flex;
  flex-direction: column;
}

/* Menu bar */
.menubar {
  height: 45px;
  display: flex;
  align-items: center;
  border-bottom: 1px solid #3c3c3c;
  padding: 0 4px 2px 14px;
}

.logo {
  width: 18px;
  height: 18px;
  border-radius: 3px;
  background: #49021f;
  color: #ff3366;
  font-size: 11px;
  font-weight: bold;
  line-height: 17px;
  text-align: center;
}

.home {
  margin-left: 22px;
}

.menus {
  display: flex;
  flex: 1;
  margin-left: 15px;
}

.menus button {
  padding: 0 11px;
  font-size: 14px;
  line-height: 24px;
  color: #f0f0f0;
}

.workspace {
  height: 26px;
  margin: 0 10px 0 12px;
  padding: 0 15px;
  gap: 9px;
  font-size: 14px;
  border: solid #474747;
  border-width: 0 1px;
}

.workspace svg {
  stroke-width: 2;
}

.search {
  width: 172px;
  height: 26px;
  background: #454545;
  border: 1px solid #696969;
  border-radius: 3px;
}

.win-ctl {
  align-self: flex-start;
  display: flex;
  height: 31px;
  margin-left: 11px;
  border: solid #646464;
  border-width: 0 1px 1px;
  border-radius: 0 0 4px 4px;
}

.win-ctl button {
  width: 35px;
  padding-bottom: 3px;
  color: #b4b4b4;
  border-right: 1px solid #646464;
}

.win-ctl button:last-child {
  width: 56px;
  border: 0;
}

/* Control bar */
.control {
  height: 75px;
  display: grid;
  grid-template-columns:
    35px 45px 18px 109px 32px 109px 43px 33px 109px 42px 27px 108px 12px
    34px 34px 46px 6px 36px 34px 41px 21px 14px 108px 12px 126px
    38px 32px 8px 30px 107px 59px 226px 1fr 38px 36px;
  grid-template-rows: 27px 27px;
  row-gap: 6px;
  padding-top: 8px;
  align-items: center;
  justify-items: center;
  border-bottom: 2px solid #3c3c3c;
}

.tall {
  grid-row: span 2;
}

svg.tall {
  justify-self: start;
}

svg.proxy {
  justify-self: end;
  margin-right: 5px;
}

.control > button {
  width: 100%;
  height: 27px;
}

.control > button.box {
  width: 21px;
}

.control > .pressed {
  width: 28px;
  background: #2d2d2d;
  border-radius: 3px;
}

.control label {
  justify-self: end;
  padding-right: 5px;
}

.box {
  border: 1px solid #6e6e6e;
  border-radius: 3px;
  background: #454545;
}

.rule {
  height: 56px;
  border-left: 1px solid #4a4a4a;
}

.field {
  display: flex;
  width: 100%;
  height: 27px;
  background: #454545;
  border: 1px solid #6e6e6e;
  border-radius: 3px;
}

.field input {
  flex: 1;
  width: 0;
  padding-left: 4px;
}

.field.off {
  background: #595959;
  border-color: #595959;
}

.field.off input {
  padding-left: 6px;
  color: #bdbdbd;
}

.spin {
  width: 20px;
  display: flex;
  flex-direction: column;
  border-right: 1px solid #6e6e6e;
}

.off .spin {
  background: #5e5e5e;
  border: 0;
}

.spin button {
  flex: 1;
}

.drop {
  width: 22px;
  display: flex;
  align-items: center;
  justify-content: center;
  border-left: 1px solid #6e6e6e;
}

.off .drop {
  border: 0;
}

.light select {
  flex: 1;
  padding-left: 9px;
  background: #e3e3e3;
  color: #111;
}

.stroke-type, .corner-type {
  flex: 1;
  border: solid #e3e3e3;
  border-width: 8px 5px;
  background: #000;
}

.corner-type {
  position: relative;
  border: 0;
  background: #e3e3e3;
}

.corner-type::after {
  content: "";
  position: absolute;
  inset: 3px 4px 2px 3px;
  border: solid #111;
  border-width: 2px 2px 0 0;
}

.autofit {
  padding-left: 4px;
}

.pbox {
  display: grid;
  place-items: center;
}

.pbox > * {
  grid-area: 1 / 1;
}

.pbox b {
  font: 25px "Liberation Serif", serif;
}

.fx-row {
  display: flex;
  align-items: center;
  gap: 13px;
  width: 100%;
  padding-left: 4px;
}

.fx-row .field {
  width: 88px;
  margin-left: -7px;
}

.fx {
  width: 24px;
  font: italic bold 18px "Liberation Serif", serif;
}

.overrides {
  display: flex;
  justify-self: end;
  gap: 8px;
}

.edge {
  border-left: 1px solid #4a4a4a;
}

/* Workspace */
.work {
  position: relative;
  flex: 1;
  min-height: 0;
  display: flex;
}

.dock-head {
  display: flex;
  align-items: center;
  justify-content: flex-end;
  height: 15px;
  padding-right: 6px;
  background: #424242;
  border-bottom: 1px solid #383838;
}

.dock-head.left {
  padding-left: 7px;
  justify-content: flex-start;
}

.grip {
  width: 24px;
  height: 6px;
  background: repeating-linear-gradient(90deg, #3a3a3a 0 1px, transparent 1px 3px);
}

.grip-v {
  width: 3px;
  height: 26px;
  margin-right: 24px;
  background: repeating-linear-gradient(#3a3a3a 0 1px, transparent 1px 3px);
}

.tools {
  width: 52px;
  border-right: 3px solid #3c3c3c;
}

.tool-list {
  display: flex;
  flex-direction: column;
  align-items: center;
  padding: 4px 0 7px;
  border-bottom: 1px solid #3c3c3c;
}

.tool-list > .grip {
  margin-bottom: 9px;
}

.tool-list > button {
  position: relative;
  width: 35px;
  height: 30px;
}

.tool-list > .on, .dock .on {
  height: 28px;
  margin-bottom: 1px;
  background: #2d2d2d;
  border-radius: 3px;
}

.tool-list > .roomy {
  height: 32px;
}

.tool-list > .apply {
  margin-top: 4px;
}

.tool-list > .low {
  height: 34px;
  margin-top: 4px;
}

.more::after {
  content: "";
  position: absolute;
  right: 1px;
  bottom: 1px;
  border: solid transparent;
  border-width: 0 0 5px 5px;
  border-bottom-color: #c8c8c8;
}

.tool-list hr {
  width: 44px;
  height: 1px;
  margin: 1px 0 2px;
  border: 0;
  background: #484848;
}

.pair {
  display: flex;
  gap: 8px;
  height: 24px;
  align-items: center;
}

.fillstroke {
  position: relative;
  width: 36px;
  height: 36px;
  margin: 3px 0 5px;
}

.fillstroke svg:nth-child(2) {
  position: absolute;
  right: 0;
  bottom: 0;
}

.sq {
  width: 17px;
  height: 15px;
  background: #2d2d2d;
  border-radius: 2px;
}

.tee {
  width: 12px;
  color: #b0b0b0;
  font: bold 15px "Liberation Serif", serif;
}

.tool-list .on .chip {
  width: 20px;
  height: 18px;
  background: #000;
  border: 1px solid #aaa;
}

/* Document window */
.doc {
  flex: 1;
  min-width: 0;
  display: flex;
  flex-direction: column;
}

.tabs {
  height: 36px;
  background: #424242;
}

.tab {
  display: flex;
  align-items: center;
  gap: 5px;
  width: 210px;
  height: 36px;
  padding-left: 18px;
  background: #535353;
  font-size: 14px;
  font-weight: bold;
  white-space: nowrap;
}

.tab button {
  color: #f0f0f0;
  font-size: 18px;
  line-height: 18px;
}

.ruler-x {
  display: flex;
  height: 20px;
  background: #1f1f1f;
  border-bottom: 1px solid #9a9a9a;
}

.origin {
  width: 20px;
  border-right: 1px solid #9a9a9a;
  background:
    repeating-linear-gradient(90deg, #888 0 1px, transparent 1px 3px) 0 5px / 100% 1px no-repeat,
    repeating-linear-gradient(#888 0 1px, transparent 1px 3px) 5px 0 / 1px 100% no-repeat;
}

.scale {
  position: relative;
  flex: 1;
  overflow: hidden;
}

.ruler-y {
  position: relative;
  width: 20px;
  overflow: hidden;
  background: #1f1f1f;
  border-right: 1px solid #9a9a9a;
}

.tick {
  position: absolute;
  background: #9a9a9a;
}

.scale .tick {
  bottom: 0;
  width: 1px;
}

.ruler-y .tick {
  right: 0;
  height: 1px;
}

/* Pointer position on both rulers */
.scale .cursor {
  width: 0;
  background: none;
  border-left: 1px dotted #ddd;
}

.ruler-y .cursor {
  height: 0;
  background: none;
  border-top: 1px dotted #ddd;
}

.num {
  position: absolute;
  line-height: 12px;
}

.scale .num {
  top: 1px;
}

.ruler-y .num {
  left: 2px;
  width: 8px;
  word-break: break-all;
}

.view {
  flex: 1;
  min-height: 0;
  display: flex;
}

.canvas {
  position: relative;
  flex: 1;
  background: #5e5e5e;
  overflow: hidden;
}

.page {
  position: absolute;
  left: 597px;
  top: 9px;
  width: 565px;
  height: 799px;
  background: #fff;
  box-shadow: 2px 2px 0 #000;
  color: #000;
}

.margins {
  position: absolute;
  inset: 34px 34px 33px 33px;
  border: 1px solid #c95fd0;
  border-left-color: #8a43c8;
  border-right-color: #8a43c8;
}

.shape, .frame {
  position: absolute;
  border: 1px solid #5b93cb;
}

.frame {
  font: 10px/10px "Liberation Serif", serif;
}

.cyan { background: #00aeef; }
.magenta { background: #ec008c; }
.yellow { background: #fff200; }
.red { background: #d2232a; }
.green { background: #3fae49; }
.blue { background: #21409a; }
.black { background: #000; }
.paper { background: #fff; }

.shape.cyan { left: 68px; top: 56px; width: 163px; height: 76px; }
.frame.a { left: 101px; top: 172px; width: 96px; height: 35px; }
.shape.magenta { left: 221px; top: 274px; width: 132px; height: 81px; }
.frame.b { left: 259px; top: 375px; width: 57px; height: 25px; }
.shape.yellow { left: 353px; top: 444px; width: 145px; height: 100px; }
.frame.c { left: 385px; top: 578px; width: 70px; height: 26px; font-size: 8px; }

.vscroll {
  width: 20px;
  display: flex;
  flex-direction: column;
  align-items: center;
  justify-content: space-between;
  padding-bottom: 5px;
  background: #4b4b4b;
}

.vscroll .thumb {
  width: 18px;
  height: 89%;
  border-radius: 9px;
  background: #6a6a6a;
}

.status {
  display: flex;
  align-items: center;
  height: 22px;
  padding: 1px 0 0 17px;
  border-bottom: 2px solid #3c3c3c;
  font-size: 12px;
}

.status .zoom {
  width: 52px;
}

.nav {
  width: 26px;
}

.chev + .nav {
  margin-left: 8px;
}

.status .field {
  width: 113px;
  height: 19px;
  margin: 0 7px 0 4px;
}

.pre {
  width: 50px;
}

.profile {
  width: 127px;
  margin-left: 4px;
}

.ok {
  width: 14px;
  height: 14px;
  margin: 0 7px 0 18px;
  border-radius: 50%;
  background: #17981b;
}

.errs {
  width: 76px;
}

.hscroll {
  flex: 1;
  display: flex;
  align-items: center;
  justify-content: flex-end;
  gap: 7px;
  height: 20px;
  margin-left: 5px;
  padding: 0 7px;
  background: #4b4b4b;
}

.hscroll svg:first-child {
  margin-right: auto;
}

.hscroll .thumb {
  width: 75%;
  height: 18px;
  border-radius: 9px;
  background: #6a6a6a;
}

.split {
  width: 48px;
  padding-right: 16px;
}

/* Right docks */
.dock {
  width: 51px;
  border-left: 2px solid #3c3c3c;
}

.dock-list {
  display: flex;
  flex-direction: column;
  align-items: center;
  height: 122px;
  padding-top: 4px;
  border-bottom: 2px solid #3c3c3c;
}

.dock-list.short {
  height: 52px;
}

.dock-list .grip {
  margin-bottom: 2px;
}

.dock-list.short .grip {
  margin-bottom: 6px;
}

.dock-list button {
  width: 34px;
  height: 35px;
}

/* Panels */
.panel {
  position: absolute;
  display: flex;
  flex-direction: column;
  background: #535353;
  border: 1px solid #383838;
}

.panel-tabs {
  display: flex;
  flex: none;
  height: 35px;
  background: #424242;
  border-bottom: 1px solid #3a3a3a;
}

.panel-tabs button {
  padding: 0 4px 0 15px;
  color: #a3a3a3;
  font-size: 13px;
  font-weight: bold;
  white-space: nowrap;
  border-right: 1px solid #3a3a3a;
}

.panel-tabs .cur {
  height: 35px;
  padding: 0 12px 0 8px;
  gap: 6px;
  background: #535353;
  color: #f0f0f0;
}

.panel-foot {
  display: flex;
  justify-content: center;
  height: 11px;
  padding-top: 2px;
  border-top: 2px solid #3a3a3a;
}

.swatches {
  right: 99px;
  top: 11px;
  width: 302px;
  height: 545px;
  border-top: 4px solid #333;
}

.panel-tabs .collapse, .panel-tabs .pmenu {
  border: 0;
}

.panel-tabs .collapse {
  margin-left: auto;
  padding: 0 9px 0 0;
}

.panel-tabs .pmenu {
  height: 14px;
  align-self: center;
  padding: 0 7px 0 9px;
  border-left: 1px solid #a3a3a3;
}

.sw-tools {
  display: flex;
  align-items: center;
  height: 50px;
  padding: 2px 0 0 7px;
}

.sw-tools .fillstroke {
  margin: 0;
}

.sw-tools .swap {
  position: absolute;
  top: 0;
  right: 0;
}

.sw-tools .sq {
  width: 24px;
  height: 23px;
  margin-left: 12px;
}

.sw-tools .tee {
  margin: 0 51px 0 8px;
  font-size: 17px;
}

.sw-tools .field {
  width: 66px;
  height: 26px;
  margin: 0 3px 0 8px;
}

.sw-list {
  flex: none;
  display: flex;
  flex-direction: column;
  height: 273px;
  margin: 0;
  padding: 0;
  list-style: none;
}

.sw-list li {
  flex: 1;
  display: flex;
  align-items: center;
  gap: 6px;
  padding: 0 21px 0 22px;
  border-top: 1px solid #5e5e5e;
}

.sw-list li span {
  flex: 1;
  padding: 1px 0 0 4px;
}

.sw-list i {
  width: 14px;
}

.sw-list .chip {
  width: 16px;
  height: 16px;
  border: 1px solid #2a2a2a;
}

.sw-list .cur {
  background: #4d6a85;
  font-weight: bold;
}

.sw-actions {
  display: flex;
  align-items: center;
  gap: 18px;
  height: 32px;
  margin-top: auto;
  padding: 0 30px 0 8px;
  border-top: 1px solid #5e5e5e;
}

.sw-actions .lib {
  margin-right: auto;
}

.script {
  right: 121px;
  top: 535px;
  width: 304px;
  height: 315px;
  border-top-left-radius: 5px;
}

.panel-cap {
  height: 16px;
  background: #484848;
  border-bottom: 1px solid #383838;
}

.panel-tabs .merge {
  width: 75px;
  justify-content: flex-start;
  overflow: hidden;
  padding-right: 0;
}

.label-box {
  display: flex;
  height: 207px;
  margin: 6px 8px 0 6px;
  padding: 1px 4px 2px 2px;
  background: #fff;
  border-radius: 3px;
}

.label-box textarea {
  flex: 1;
  resize: none;
  color: #111;
}

.label-scroll {
  width: 20px;
  display: flex;
  flex-direction: column;
  align-items: center;
  justify-content: space-between;
  padding: 7px 0;
  background: #efefef;
}

.tri {
  border: solid transparent;
  border-width: 7px 5px 0;
  border-top-color: #a0a0a0;
}

.tri.up {
  border-width: 0 5px 7px;
  border-bottom-color: #a0a0a0;
}

.script p {
  flex: 1;
  margin: 12px 6px 0;
  font-size: 12px;
}

/* Taskbar */
.taskbar {
  position: relative;
  height: 60px;
  display: flex;
  align-items: center;
  justify-content: space-between;
  padding: 0 23px 0 24px;
  color: #222;
  font-family: "Open Sans", "Noto Sans", sans-serif;
  font-size: 14px;
  line-height: 20px;
  background: linear-gradient(90deg, #d3e5ce, #d9dbd9 6%, #d9dbd9 24%, #dce1cb 31%, #d8dcda 36%, #ebdcd2 44%, #ebdcd2 60%, #dde1ca 68%, #dadbd8 74%, #d7dcd6 86%, #d3e4cb 93%, #d4e5c4);
}

.taskbar button {
  color: #1c1c1c;
}

.weather {
  gap: 6px;
  text-align: left;
}

.weather small {
  font-size: 14px;
  color: #555;
}

.umbrella {
  position: relative;
  width: 34px;
}

.umbrella em {
  position: absolute;
  top: -8px;
  left: 14px;
  width: 20px;
  height: 20px;
  border-radius: 50%;
  background: #c42b1c;
  color: #fff;
  font-style: normal;
  font-size: 12px;
  text-align: center;
}

/* Icons stay in the middle of the bar whatever the side widths */
.apps {
  position: absolute;
  left: 50%;
  transform: translateX(-50%);
  display: flex;
  gap: 7px;
}

.apps button {
  position: relative;
  width: 48px;
  height: 50px;
  border-radius: 4px;
}

.apps .active {
  background: #f3f0ee;
}

.run::after {
  content: "";
  position: absolute;
  bottom: 0;
  left: 20px;
  width: 8px;
  height: 4px;
  border-radius: 2px;
  background: #85807b;
}

.active::after {
  left: 14px;
  width: 20px;
  background: #0a78d4;
}

.id-tile {
  width: 28px;
  height: 28px;
  border-radius: 5px;
  background: #49021f;
  color: #ff3366;
  font-weight: bold;
  line-height: 26px;
}

.apps .dell::before {
  content: "";
  position: absolute;
  inset: 10px 9px;
  border: 2px solid #111;
  border-radius: 50%;
}

.apps .dell {
  font-size: 9px;
  font-weight: bold;
}

.tray {
  display: flex;
  align-items: center;
  line-height: 20px;
}

.lang {
  margin: 0 22px 0 20px;
}

.net {
  gap: 8px;
  margin-right: 18px;
}

.taskbar .clock {
  text-align: right;
}
```
FILE: rulers.js
```js
// Ruler marks in inches, an eighth per tick
const INCH = 547 / 8;
const LAST_LABEL = 12;

function drawRuler(el, zero, length, vertical, cursor) {
  const first = Math.ceil(-zero / INCH * 8);
  const last = Math.floor((length - zero) / INCH * 8);
  for (let i = first; i <= last; i++) {
    const pos = Math.round(zero + i * INCH / 8);
    const tick = document.createElement('span');
    const size = i % 8 === 0 ? 20 : i % 4 === 0 ? 8 : i % 2 === 0 ? 5 : 3;
    tick.className = 'tick';
    tick.style[vertical ? 'top' : 'left'] = pos + 'px';
    tick.style[vertical ? 'width' : 'height'] = size + 'px';
    el.append(tick);
    if (i % 8 === 0 && i / 8 <= LAST_LABEL) {
      const num = document.createElement('span');
      num.className = 'num';
      num.textContent = Math.abs(i / 8);
      num.style[vertical ? 'top' : 'left'] = pos + 2 + 'px';
      el.append(num);
    }
  }

  const mark = document.createElement('span');
  mark.className = 'tick cursor';
  mark.style[vertical ? 'top' : 'left'] = Math.round(zero + cursor * INCH) + 'px';
  mark.style[vertical ? 'width' : 'height'] = '20px';
  el.append(mark);
}

const rx = document.getElementById('rulerX');
const ry = document.getElementById('rulerY');
drawRuler(rx, 596, rx.clientWidth, false, 2.58);
drawRuler(ry, 8, ry.clientHeight, true, 4.4065);
```
